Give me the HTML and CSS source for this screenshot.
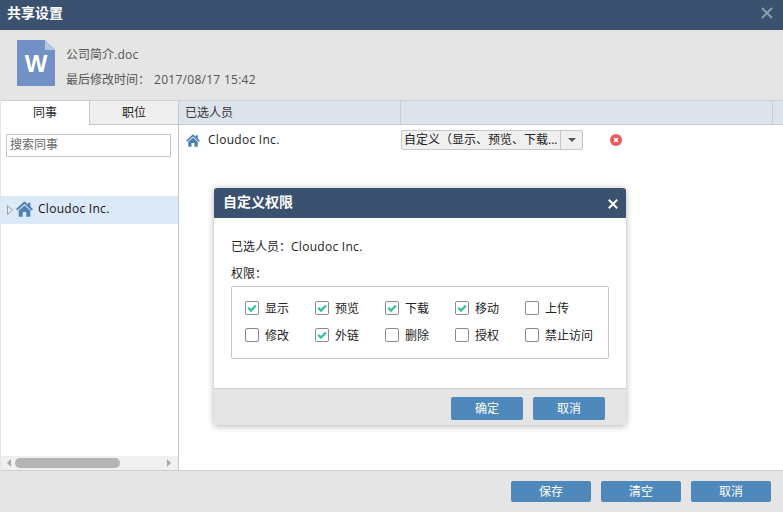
FILE: index.html
```html
<!DOCTYPE html>
<html lang="zh-CN">
<head>
<meta charset="utf-8">
<title>共享设置</title>
<link rel="stylesheet" href="styles.css">
</head>
<body>
<svg class="defs" width="0" height="0" aria-hidden="true"><defs>
  <symbol id="house" viewBox="0 0 16 15"><path d="M8 0.3 L11.3 3.2 V1.5 H13.5 V5.2 L16 7.5 L14.7 8.8 L8 2.9 L1.3 8.8 L0 7.5 Z" fill="#4d82b5"/><path d="M2.5 8.9 L8 4.1 L13.5 8.9 V14.7 H9.7 V10.4 H6.3 V14.7 H2.5 Z" fill="#4d82b5"/></symbol>
  <symbol id="check" viewBox="0 0 14 14"><path d="M3.2 6.8 L6 9.6 L10.9 4.6" fill="none" stroke="#2fc29b" stroke-width="2.2"/></symbol>
</defs></svg>
<div class="app">
  <header class="titlebar">
    <span class="title">共享设置</span>
    <svg class="win-close" width="12" height="12" viewBox="0 0 12 12"><path d="M1 1 L11 11 M11 1 L1 11" stroke="#8d9cb0" stroke-width="2"/></svg>
  </header>
  <section class="fileinfo">
    <svg class="docicon" width="38" height="46" viewBox="0 0 38 46"><path d="M1 0 H28 L38 10 V45 Q38 46 37 46 H1 Q0 46 0 45 V1 Q0 0 1 0 Z" fill="#7090c6"/><path d="M28 0 L38 10 H28 Z" fill="#b5c6e2"/></svg>
    <span class="docletter">W</span>
    <div class="filetext">
      <div class="filename">公司简介<span class="latin">.doc</span></div>
      <div class="filetime"><span class="timelabel">最后修改时间：</span><span class="latin">2017/08/17 15:42</span></div>
    </div>
  </section>
  <main class="panels">
    <aside class="left">
      <div class="tabs">
        <div class="tab active">同事</div>
        <div class="tab">职位</div>
      </div>
      <div class="searchwrap"><div class="search">搜索同事</div></div>
      <div class="tree">
        <div class="treerow">
          <svg class="caret" width="6" height="10" viewBox="0 0 6 10"><path d="M0.5 0.5 L5.5 5 L0.5 9.5 Z" fill="#e3ebf5" stroke="#a0a0a0"/></svg>
          <svg class="treehouse" width="17" height="16"><use href="#house"/></svg>
          <span class="treelabel latin">Cloudoc Inc.</span>
        </div>
      </div>
      <div class="hscroll">
        <span class="arr arr-l"></span>
        <span class="thumb"></span>
        <span class="arr arr-r"></span>
      </div>
    </aside>
    <section class="right">
      <div class="thead">
        <div class="th th1">已选人员</div>
        <div class="th th2"></div>
        <div class="th th3"></div>
      </div>
      <div class="trow">
        <div class="cell-name">
          <svg width="14" height="13"><use href="#house"/></svg>
          <span class="rowlabel latin">Cloudoc Inc.</span>
        </div>
        <div class="select">
          <span class="select-text">自定义（显示、预览、下载...</span>
          <span class="select-btn"><i class="down"></i></span>
        </div>
        <svg class="remove" width="12" height="12" viewBox="0 0 12 12"><circle cx="6" cy="6" r="6" fill="#ee5a5a"/><path d="M4 4 L8 8 M8 4 L4 8" stroke="#fff" stroke-width="1.6"/></svg>
      </div>
    </section>
  </main>
  <footer class="footer">
    <button class="btn big">保存</button>
    <button class="btn big">清空</button>
    <button class="btn big">取消</button>
  </footer>
  <div class="dialog">
    <div class="dlg-head">
      <span class="dlg-title">自定义权限</span>
      <svg width="10" height="10" viewBox="0 0 10 10"><path d="M0.8 0.8 L9.2 9.2 M9.2 0.8 L0.8 9.2" stroke="#fff" stroke-width="2"/></svg>
    </div>
    <div class="dlg-body">
      <div class="dlg-line">已选人员：<span class="latin">Cloudoc Inc.</span></div>
      <div class="dlg-line second">权限：</div>
      <div class="perms">
        <label class="perm"><span class="box"><svg width="14" height="14"><use href="#check"/></svg></span><span class="ptext">显示</span></label>
        <label class="perm"><span class="box"><svg width="14" height="14"><use href="#check"/></svg></span><span class="ptext">预览</span></label>
        <label class="perm"><span class="box"><svg width="14" height="14"><use href="#check"/></svg></span><span class="ptext">下载</span></label>
        <label class="perm"><span class="box"><svg width="14" height="14"><use href="#check"/></svg></span><span class="ptext">移动</span></label>
        <label class="perm"><span class="box"></span><span class="ptext">上传</span></label>
        <label class="perm"><span class="box"></span><span class="ptext">修改</span></label>
        <label class="perm"><span class="box"><svg width="14" height="14"><use href="#check"/></svg></span><span class="ptext">外链</span></label>
        <label class="perm"><span class="box"></span><span class="ptext">删除</span></label>
        <label class="perm"><span class="box"></span><span class="ptext">授权</span></label>
        <label class="perm"><span class="box"></span><span class="ptext">禁止访问</span></label>
      </div>
    </div>
    <div class="dlg-foot">
      <button class="btn small">确定</button>
      <button class="btn small">取消</button>
    </div>
  </div>
</div>
</body>
</html>
```
FILE: styles.css
```css
* { box-sizing: border-box; }
html, body { margin: 0; padding: 0; }
body {
  width: 783px;
  height: 512px;
  overflow: hidden;
  font-family: "Open Sans", "Noto Sans CJK SC", sans-serif;
  font-size: 12px;
  color: #222;
  background: #e5e5e5;
}
.defs { position: absolute; }
.latin { letter-spacing: .28px; }
.app { position: relative; width: 783px; height: 512px; display: flex; flex-direction: column; }

.titlebar {
  height: 30px;
  flex: none;
  background: #3a526f;
  display: flex;
  align-items: center;
  justify-content: space-between;
  padding: 0 10px 4px 7px;
}
.title { color: #fff; font-size: 14px; font-weight: 700; line-height: 20px; }

.fileinfo {
  height: 70px;
  flex: none;
  background: #e5e5e5;
  position: relative;
  display: flex;
  padding: 10px 0 0 17px;
  gap: 11px;
}
.docletter {
  position: absolute;
  left: 17px;
  top: 17px;
  width: 38px;
  text-align: center;
  font-family: "Liberation Sans", sans-serif;
  font-weight: 700;
  font-size: 24px;
  line-height: 34px;
  color: #fff;
}
.filetext { color: #555; padding-top: 5px; }
.filename { line-height: 20px; }
.filetime { line-height: 20px; margin-top: 5px; display: flex; }
.timelabel { width: 88px; }

.panels {
  flex: none;
  height: 371px;
  margin-left: 1px;
  background: #fff;
  border-top: 1px solid #cfcfcf;
  border-bottom: 1px solid #cfcfcf;
  display: flex;
}
.left {
  width: 178px;
  flex: none;
  border-right: 1px solid #c8c8c8;
  display: flex;
  flex-direction: column;
}
.tabs { display: flex; height: 24px; flex: none; }
.tab {
  width: 89px;
  text-align: center;
  line-height: 24px;
  background: #efefef;
  border-bottom: 1px solid #c8c8c8;
}
.tab.active { background: #fff; border-bottom: 0; border-right: 1px solid #c8c8c8; }
.tab + .tab { width: 88px; }
.searchwrap { padding: 9px 7px 0 5px; height: 71px; flex: none; }
.search {
  height: 23px;
  border: 1px solid #c8c8c8;
  line-height: 19px;
  padding-left: 3px;
  color: #666;
}
.tree { flex: 1; }
.treerow {
  height: 28px;
  background: #dce9f9;
  display: flex;
  align-items: center;
  color: #111;
  padding-left: 6px;
}
.caret { margin-right: 3px; }
.treehouse { margin-right: 5px; margin-top: -3px; }
.treelabel { line-height: 20px; margin-top: -3px; }
.hscroll {
  height: 14px;
  flex: none;
  background: #f0f0f0;
  position: relative;
  display: flex;
  align-items: center;
  padding: 0 6px;
  justify-content: space-between;
}
.thumb { position: absolute; left: 14px; top: 2px; width: 105px; height: 10px; border-radius: 5px; background: #b4b4b4; }
.arr { width: 0; height: 0; border-top: 4px solid transparent; border-bottom: 4px solid transparent; }
.arr-l { border-right: 4px solid #a8a8a8; }
.arr-r { border-left: 4px solid #a8a8a8; margin-right: 1px; }

.right { flex: 1; min-width: 0; }
.thead { height: 24px; background: #dce3eb; border-bottom: 1px solid #c8ccd2; display: flex; }
.th { line-height: 23px; border-right: 1px solid #c8ccd2; color: #333; }
.th1 { width: 222px; padding-left: 6px; }
.th2 { width: 372px; }
.th3 { flex: 1; border-right: 0; }
.trow { display: flex; align-items: flex-start; padding: 5px 0 0 7px; }
.cell-name { width: 215px; display: flex; align-items: center; gap: 8px; color: #222; height: 20px; }
.rowlabel { line-height: 20px; }
.select {
  width: 182px;
  height: 20px;
  background: #f0f0f0;
  border: 1px solid #c8c8c8;
  border-radius: 2px;
  display: flex;
}
.select-text { width: 158px; padding-left: 2px; line-height: 18px; white-space: nowrap; overflow: hidden; color: #222; }
.select-btn { flex: 1; border-left: 1px solid #c8c8c8; display: flex; align-items: center; justify-content: center; }
.down { width: 0; height: 0; border-left: 4px solid transparent; border-right: 4px solid transparent; border-top: 4px solid #555; }
.remove { margin: 4px 0 0 27px; }

.footer {
  flex: 1;
  display: flex;
  justify-content: flex-end;
  gap: 10px;
  padding: 10px 12px 0 0;
}
.btn {
  background: #4f89bb;
  color: #fff;
  border: 0;
  border-radius: 2px;
  font: inherit;
  padding: 0 0 2px;
}
.btn.big { width: 80px; height: 21px; }
.btn.small { width: 72px; height: 23px; }

.dialog {
  position: absolute;
  left: 214px;
  top: 188px;
  width: 412px;
  height: 237px;
  background: #fff;
  border-radius: 3px;
  box-shadow: 0 1px 7px rgba(0, 0, 0, .3);
  display: flex;
  flex-direction: column;
  overflow: hidden;
}
.dlg-head {
  height: 30px;
  flex: none;
  background: #3a526f;
  display: flex;
  align-items: center;
  justify-content: space-between;
  padding: 0 8px 3px 9px;
}
.dlg-title { color: #fff; font-size: 14px; font-weight: 700; line-height: 20px; }
.dlg-head svg { margin-top: 5px; }
.dlg-body { flex: 1; padding: 19px 17px 0; }
.dlg-line { line-height: 20px; color: #222; }
.dlg-line.second { margin-top: 7px; }
.perms {
  margin-top: 2px;
  width: 378px;
  height: 73px;
  border: 1px solid #c8c8c8;
  border-radius: 2px;
  padding: 7px 0 0 13px;
  display: grid;
  grid-template-columns: repeat(5, 70px);
  grid-auto-rows: 27px;
}
.perm { display: flex; align-items: center; gap: 6px; color: #222; white-space: nowrap; }
.ptext { line-height: 20px; margin-top: 2px; }
.box {
  width: 14px;
  height: 14px;
  flex: none;
  border: 1px solid #8a8a8a;
  border-radius: 2px;
  background: #fff;
  position: relative;
}
.box svg { position: absolute; left: -1px; top: -1px; }
.dlg-foot {
  height: 37px;
  flex: none;
  background: #e5e5e5;
  border-top: 1px solid #cfcfcf;
  display: flex;
  justify-content: flex-end;
  gap: 10px;
  padding: 8px 21px 0 0;
}
```
